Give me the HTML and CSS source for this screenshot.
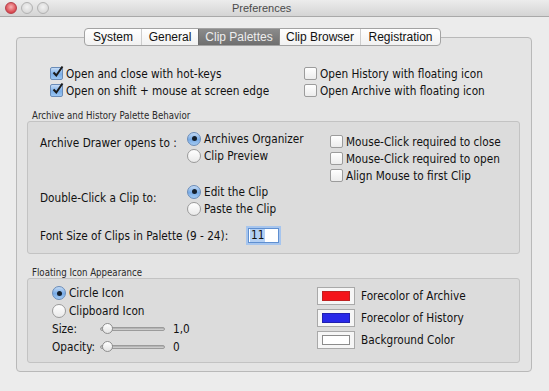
FILE: index.html
```html
<!DOCTYPE html>
<html lang="en">
<head>
  <meta charset="UTF-8" />
  <title>Preferences</title>
  <link rel="stylesheet" href="styles.css">
</head>
<body>
<div class="window">
  <div class="titlebar">
    <div class="lights">
      <span class="light close"></span>
      <span class="light"></span>
      <span class="light"></span>
    </div>
    <div class="title">Preferences</div>
  </div>

  <div class="content">
    <div class="tabs">
      <div class="tab t-system">System</div>
      <div class="tab t-general">General</div>
      <div class="tab t-wide active">Clip Palettes</div>
      <div class="tab t-wide">Clip Browser</div>
      <div class="tab t-reg">Registration</div>
    </div>

    <div class="tabbox">
      <div class="top-opts">
        <div class="col">
          <label class="row"><span class="cb on"><svg width="15" height="15" viewBox="0 0 15 15"><path d="M3.5 7.5 L6.3 10.5 L12.5 1.5" fill="none" stroke="#1b1b1b" stroke-width="2"/></svg></span>Open and close with hot-keys</label>
          <label class="row"><span class="cb on"><svg width="15" height="15" viewBox="0 0 15 15"><path d="M3.5 7.5 L6.3 10.5 L12.5 1.5" fill="none" stroke="#1b1b1b" stroke-width="2"/></svg></span>Open on shift + mouse at screen edge</label>
        </div>
        <div class="col">
          <label class="row"><span class="cb"></span>Open History with floating icon</label>
          <label class="row"><span class="cb"></span>Open Archive with floating icon</label>
        </div>
      </div>

      <div class="legend">Archive and History Palette Behavior</div>
      <div class="group g1">
        <div class="g1-left">
          <div class="pair p1">
            <div class="plabel">Archive Drawer opens to :</div>
            <div class="radios">
              <label class="row"><span class="rb on"></span>Archives Organizer</label>
              <label class="row"><span class="rb"></span>Clip Preview</label>
            </div>
          </div>
          <div class="pair p2">
            <div class="plabel">Double-Click a Clip to:</div>
            <div class="radios">
              <label class="row"><span class="rb on"></span>Edit the Clip</label>
              <label class="row"><span class="rb"></span>Paste the Clip</label>
            </div>
          </div>
          <div class="fontrow">
            <span class="flabel">Font Size of Clips in Palette (9 - 24):</span>
            <span class="field"><span class="sel">11</span></span>
          </div>
        </div>
        <div class="g1-right">
          <label class="row"><span class="cb"></span>Mouse-Click required to close</label>
          <label class="row"><span class="cb"></span>Mouse-Click required to open</label>
          <label class="row"><span class="cb"></span>Align Mouse to first Clip</label>
        </div>
      </div>

      <div class="legend l2">Floating Icon Appearance</div>
      <div class="group g2">
        <div class="g2-left">
          <label class="row"><span class="rb on"></span>Circle Icon</label>
          <label class="row"><span class="rb"></span>Clipboard Icon</label>
          <div class="row">
            <span class="slabel">Size:</span>
            <span class="slider"><span class="knob"></span></span>
            <span class="val">1,0</span>
          </div>
          <div class="row">
            <span class="slabel">Opacity:</span>
            <span class="slider"><span class="knob"></span></span>
            <span class="val">0</span>
          </div>
        </div>
        <div class="g2-right">
          <div class="wrow"><span class="well"><span class="swatch red"></span></span>Forecolor of Archive</div>
          <div class="wrow"><span class="well"><span class="swatch blue"></span></span>Forecolor of History</div>
          <div class="wrow"><span class="well"><span class="swatch white"></span></span>Background Color</div>
        </div>
      </div>
    </div>
  </div>
</div>
</body>
</html>
```

FILE: styles.css
```css
* {
  box-sizing: border-box;
}
body {
  margin: 0;
  background: #ececec;
  font-family: "DejaVu Sans Condensed", "Liberation Sans", sans-serif;
  font-size: 11.7px;
  color: #111;
}
.window {
  width: 549px;
  height: 391px;
  overflow: hidden;
}

/* title bar */
.titlebar {
  height: 17px;
  background: linear-gradient(#ececec, #d4d4d4);
  border-bottom: 1px solid #a9a9a9;
  display: flex;
  align-items: center;
}
.lights {
  display: flex;
  gap: 4px;
  padding-left: 5px;
  width: 232px;
}
.light {
  width: 12px;
  height: 12px;
  border-radius: 50%;
  background: radial-gradient(circle at 50% 40%, #f2f2f2, #cfcfcf);
  border: 1px solid #b2b2b2;
}
.light.close {
  background: radial-gradient(circle at 50% 40%, #f7b3b3, #d9474f 70%);
  border-color: #b4404a;
}
.title {
  font-family: "Liberation Sans", sans-serif;
  font-size: 11px;
  color: #4a4a4a;
}

/* tabs */
.content {
  padding-top: 11px;
}
.tabs {
  position: relative;
  z-index: 1;
  margin-left: 84px;
  width: 357px;
  height: 18px;
  display: flex;
  border: 1px solid #a3a3a3;
  border-radius: 4px;
  background: linear-gradient(#ffffff, #f1f1f1);
  overflow: hidden;
}
.tab {
  display: flex;
  align-items: center;
  justify-content: center;
  font-family: "Liberation Sans", sans-serif;
  font-size: 12px;
  color: #111;
  border-left: 1px solid #cdcdcd;
}
.t-system { width: 56px; border-left: none; }
.t-general { width: 57px; }
.t-wide { width: 81px; }
.t-reg { width: 80px; }
.tab.active {
  background: linear-gradient(#8b8b8b, #6f6f6f);
  color: #eeeeee;
  border-left-color: #6a6a6a;
}
.tab.active + .tab {
  border-left-color: #8a8a8a;
}

.tabbox {
  margin-top: -9px;
  margin-left: 16px;
  width: 516px;
  height: 335px;
  background: #e4e4e4;
  border: 1px solid #b9b9b9;
  border-radius: 4px;
}

/* rows and controls */
.row {
  height: 17px;
  display: flex;
  align-items: center;
  gap: 3px;
  white-space: nowrap;
}
.cb {
  width: 13px;
  height: 13px;
  flex: none;
  border: 1px solid #9c9c9c;
  border-radius: 2px;
  background: linear-gradient(#ffffff, #ececec);
  position: relative;
}
.cb.on {
  background: linear-gradient(#c6dcf6, #7aaee8 55%, #9cc6f2);
  border-color: #6a8cb8;
}
.cb svg {
  position: absolute;
  left: -1px;
  top: -3px;
}
.rb {
  width: 14px;
  height: 14px;
  flex: none;
  border-radius: 50%;
  border: 1px solid #9a9a9a;
  background: linear-gradient(#ffffff, #e9e9e9);
  display: flex;
  align-items: center;
  justify-content: center;
}
.rb.on {
  background: linear-gradient(#c3daf5, #78abe6 55%, #a3caf2);
  border-color: #6a8cb8;
}
.rb.on::after {
  content: "";
  width: 5px;
  height: 5px;
  border-radius: 50%;
  background: #15202c;
}

.top-opts {
  padding: 27px 0 0 33px;
  display: grid;
  grid-template-columns: 254px 1fr;
}

.legend {
  margin-top: 11px;
  padding-left: 15px;
  height: 11px;
  line-height: 11px;
  font-size: 9.6px;
  color: #2a2a2a;
}
.legend.l2 {
  margin-top: 13px;
}
.group {
  margin-left: 10px;
  width: 493px;
  background: #dcdcdc;
  border: 1px solid #c3c3c3;
  border-radius: 3px;
  display: flex;
}
.g1 {
  height: 133px;
}
.g1-left {
  width: 302px;
  padding: 8px 0 0 12px;
}
.pair {
  display: flex;
}
.p2 {
  margin-top: 19px;
}
.plabel {
  width: 147px;
  margin-top: 5px;
  height: 17px;
  line-height: 17px;
}
.p2 .plabel {
  margin-top: 7px;
}
.fontrow {
  margin-top: 8px;
  display: flex;
  align-items: center;
}
.flabel {
  width: 205px;
}
.field {
  width: 31px;
  height: 15px;
  margin: 3px;
  background: #fff;
  border: 1px solid #5f8fd0;
  box-shadow: 0 0 0 2px #a6c5ee;
  display: flex;
  align-items: center;
  padding-left: 1px;
}
.sel {
  background: #b3cff3;
  line-height: 13px;
  padding: 0 1px;
}
.g1-right {
  padding-top: 11px;
}

.g2 {
  height: 85px;
}
.g2-left {
  width: 289px;
  padding: 5px 0 0 24px;
}
.g2-left .row {
  height: 18px;
}
.slabel {
  width: 45px;
}
.slider {
  width: 65px;
  height: 4px;
  border-radius: 2px;
  border: 1px solid #9b9b9b;
  background: linear-gradient(#a9a9a9, #d8d8d8);
  position: relative;
}
.knob {
  position: absolute;
  left: 1px;
  top: -5px;
  width: 11px;
  height: 11px;
  border-radius: 50%;
  border: 1px solid #8f8f8f;
  background: linear-gradient(#ffffff, #e3e3e3);
}
.val {
  margin-left: 5px;
}
.g2-right {
  padding-top: 8px;
}
.wrow {
  height: 18px;
  margin-bottom: 4px;
  display: flex;
  align-items: center;
}
.well {
  width: 38px;
  height: 18px;
  border: 1px solid #a9a9a9;
  background: #f6f6f6;
  padding: 3px 4px;
  margin-right: 6px;
}
.swatch {
  display: block;
  height: 10px;
  border: 1px solid #9a9a9a;
}
.swatch.red { background: #f4141a; border-color: #c02020; }
.swatch.blue { background: #2828e8; border-color: #2020b0; }
.swatch.white { background: #ffffff; border-color: #8c8c8c; }
```
